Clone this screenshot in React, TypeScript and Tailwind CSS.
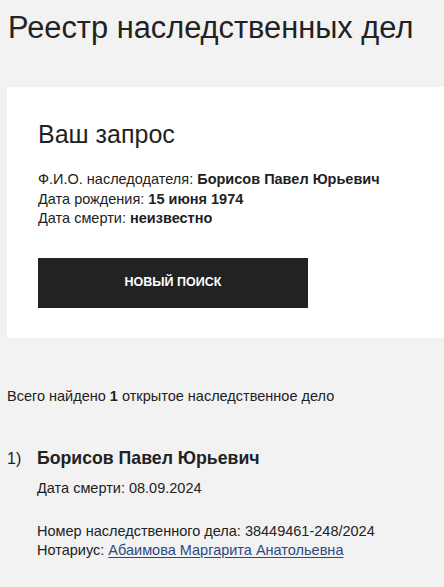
export default function App() {
  return (
    <div className="min-h-[587px] bg-[#f2f2f2] pl-[7px] font-['Liberation_Sans',Arial,sans-serif] text-[#222]">
      <h1 className="pl-[1px] pt-[10px] text-[30.8px] leading-[36px]">Реестр наследственных дел</h1>

      {/* Request card */}
      <div className="mt-[41px] bg-white pb-[30px] pl-[31px] pt-[33px]">
        <h2 className="text-[25px] leading-[28px]">Ваш запрос</h2>
        <div className="mt-[22px] text-[14.5px] leading-[19.5px]">
          <p>
            Ф.И.О. наследодателя: <b>Борисов Павел Юрьевич</b>
          </p>
          <p>
            Дата рождения: <b>15 июня 1974</b>
          </p>
          <p>
            Дата смерти: <b>неизвестно</b>
          </p>
        </div>
        <button className="mt-[29px] flex h-[50px] w-[270px] items-center justify-center bg-[#222] text-[12.5px] font-bold text-white">
          НОВЫЙ ПОИСК
        </button>
      </div>

      {/* Results */}
      <p className="mt-[49px] text-[14.5px] leading-[19.5px]">
        Всего найдено <b>1</b> открытое наследственное дело
      </p>

      <div className="mt-[40px] flex text-[14.5px] leading-[19px]">
        <span className="w-[30px] pt-[3px] text-[16px]">1)</span>
        <div>
          <h3 className="text-[17.7px] font-bold leading-[24px]">Борисов Павел Юрьевич</h3>
          <p className="mt-[9px]">Дата смерти: 08.09.2024</p>
          <p className="mt-[24px]">Номер наследственного дела: 38449461-248/2024</p>
          <p>
            Нотариус:{' '}
            <a href="#" className="text-[#2e4a7d] underline underline-offset-2">
              Абаимова Маргарита Анатольевна
            </a>
          </p>
        </div>
      </div>
    </div>
  );
}
